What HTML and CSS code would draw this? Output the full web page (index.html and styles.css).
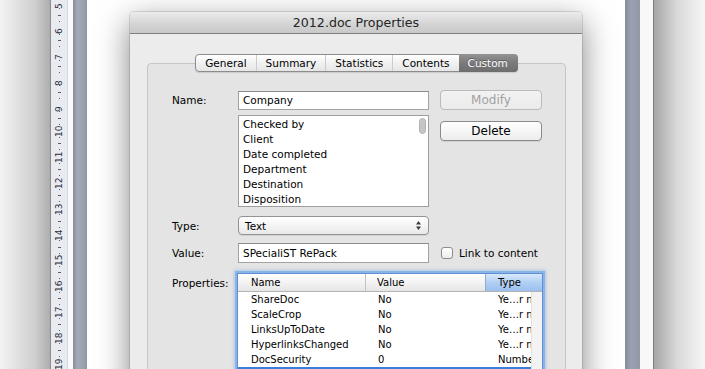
FILE: index.html
```html
<!DOCTYPE html>
<html>
<head>
<meta http-equiv="Content-Type" content="text/html; charset=utf-8">
<title>2012.doc Properties</title>
<link rel="stylesheet" href="styles.css">
</head>
<body>
<div class="desk">
    <div class="margin-left"></div>
    <div class="ruler">
        <div class="mark"><span>5</span></div>
        <div class="mark"><span>6</span></div>
        <div class="mark"><span>7</span></div>
        <div class="mark"><span>8</span></div>
        <div class="mark"><span>9</span></div>
        <div class="mark"><span>10</span></div>
        <div class="mark"><span>11</span></div>
        <div class="mark"><span>12</span></div>
        <div class="mark"><span>13</span></div>
        <div class="mark"><span>14</span></div>
        <div class="mark"><span>15</span></div>
        <div class="mark"><span>16</span></div>
        <div class="mark"><span>17</span></div>
        <div class="mark"><span>18</span></div>
        <div class="mark"><span>19</span></div>
    </div>
    <div class="gutter"></div>
    <div class="bar"></div>

    <div class="page">
        <div class="dialog">
            <div class="titlebar">2012.doc Properties</div>
            <div class="dialog-body">
                <ul class="tabs">
                    <li>General</li>
                    <li>Summary</li>
                    <li>Statistics</li>
                    <li>Contents</li>
                    <li class="active">Custom</li>
                </ul>
                <div class="group">
                    <div class="row">
                        <span class="label">Name:</span>
                        <div class="field input">Company</div>
                        <div class="btn disabled">Modify</div>
                    </div>
                    <div class="row row-list">
                        <span class="label"></span>
                        <div class="field listbox">
                            <ul class="items">
                                <li>Checked by</li>
                                <li>Client</li>
                                <li>Date completed</li>
                                <li>Department</li>
                                <li>Destination</li>
                                <li>Disposition</li>
                            </ul>
                            <div class="scroller"><div class="thumb"></div></div>
                        </div>
                        <div class="btn btn-delete">Delete</div>
                    </div>
                    <div class="row row-type">
                        <span class="label">Type:</span>
                        <div class="field select">
                            <span>Text</span>
                            <svg width="5" height="9" viewBox="0 0 5 9"><path d="M0 3.5L2.5 0L5 3.5Z M0 5.5L2.5 9L5 5.5Z" fill="#3a3a3a"/></svg>
                        </div>
                    </div>
                    <div class="row row-value">
                        <span class="label">Value:</span>
                        <div class="field input input-value">SPecialiST RePack</div>
                        <div class="link">
                            <span class="check"></span>
                            <span>Link to content</span>
                        </div>
                    </div>
                    <div class="row row-props">
                        <span class="label label-props">Properties:</span>
                        <div class="props">
                            <div class="thead">
                                <div class="th">Name</div>
                                <div class="th">Value</div>
                                <div class="th th-sorted">Type</div>
                            </div>
                            <div class="tbody">
                                <div class="rows">
                                    <div class="tr"><div class="td">ShareDoc</div><div class="td">No</div><div class="td">Ye…r no</div></div>
                                    <div class="tr"><div class="td">ScaleCrop</div><div class="td">No</div><div class="td">Ye…r no</div></div>
                                    <div class="tr"><div class="td">LinksUpToDate</div><div class="td">No</div><div class="td">Ye…r no</div></div>
                                    <div class="tr"><div class="td">HyperlinksChanged</div><div class="td">No</div><div class="td">Ye…r no</div></div>
                                    <div class="tr"><div class="td">DocSecurity</div><div class="td">0</div><div class="td">Number</div></div>
                                    <div class="tr selected"></div>
                                </div>
                                <div class="vtrack"></div>
                            </div>
                        </div>
                    </div>
                </div>
            </div>
        </div>
    </div>

    <div class="bar bar-right"></div>
    <div class="gutter gutter-right"></div>
    <div class="margin-right"></div>
</div>
</body>
</html>
```

FILE: styles.css
```css
*{ margin: 0; padding: 0; list-style: none; box-sizing: border-box;}
body{ font-family: "DejaVu Sans", "Liberation Sans", sans-serif; font-size: 10.5px; color: #000;}

.desk{ display: flex; width: 705px; height: 369px; overflow: hidden; background: #fff;}

/* word window behind the dialog */
.margin-left{ width: 51px; flex-shrink: 0; background: linear-gradient(to right, #f3f3f3, #cfcfcf 70%, #aeaeae); border-right: 1px solid #8d8d8d;}
.ruler{ width: 17px; flex-shrink: 0; background: #e8ebf0; border-right: 1px solid #d4d8de; overflow: hidden;}
.ruler .mark{ height: 25.8px; display: flex; flex-direction: column; align-items: center;
    background: linear-gradient(#5a5f6a, #5a5f6a) no-repeat 8px 12.5px / 1px 1px,
                linear-gradient(#5a5f6a, #5a5f6a) no-repeat 7px 19px / 3px 1px,
                linear-gradient(#5a5f6a, #5a5f6a) no-repeat 8px 25px / 1px 1px;}
.ruler .mark:first-child{ margin-top: -4.5px;}
.ruler .mark span{ height: 12.9px; display: flex; align-items: center; writing-mode: vertical-rl; transform: rotate(180deg); font-size: 9px; line-height: 1; color: #2a2f3c;}
.gutter{ width: 5px; flex-shrink: 0; background: #fafafa;}
.bar{ width: 14px; flex-shrink: 0; background: linear-gradient(to right, #868c98, #a3aab7 30%, #9aa1ae 80%, #8e95a2);}
.page{ width: 538px; flex-shrink: 0; background: #fff; position: relative; z-index: 1;}
.bar-right{ width: 15px; background: linear-gradient(to right, #858c9a, #9aa2b1 40%, #9199a8);}
.gutter-right{ width: 14px; background: #f8f8f8; border-right: 1px solid #7d7d7d;}
.margin-right{ flex: 1; background: linear-gradient(to right, #a6a6a6, #d9d9d9 45%, #f6f6f6);}

/* dialog */
.dialog{ width: 452px; height: 400px; margin: 12px 0 0 43px; border-radius: 4px 4px 0 0; background: #ececec;
    box-shadow: 0 10px 32px rgba(0,0,0,.5), 0 0 0 1px rgba(0,0,0,.12);}
.titlebar{ height: 22px; line-height: 21px; text-align: center; font-size: 12.6px; color: #262626;
    border-radius: 4px 4px 0 0; border-bottom: 1px solid #7e7e7e;
    background: linear-gradient(#ececec, #d3d3d3 60%, #c9c9c9);}
.dialog-body{ padding: 20px 16px 0 17px;}

.tabs{ display: flex; width: max-content; margin: 0 auto -9px; position: relative; z-index: 1;
    border: 1px solid #8c8c8c; border-radius: 4px; background: linear-gradient(#ffffff, #f1f1f1 50%, #e6e6e6);
    box-shadow: 0 1px 1px rgba(0,0,0,.12);}
.tabs li{ padding: 0 9px; height: 16px; line-height: 16px; border-left: 1px solid #cbcbcb;}
.tabs li:first-child{ border-left: 0;}
.tabs li.active{ margin: -1px -1px -1px 0; height: 18px; line-height: 18px; padding-right: 10px; border-left: 0;
    color: #fff; border-radius: 0 4px 4px 0; background: linear-gradient(#939393, #7a7a7a 50%, #6d6d6d);
    text-shadow: 0 -1px 0 rgba(0,0,0,.35);}

.group{ height: 340px; border: 1px solid #c6c6c6; border-radius: 4px; background: #e4e4e4; padding: 26px 0 0 24px;}

.row{ display: flex; align-items: center;}
.label{ width: 66px; flex-shrink: 0;}
.field{ width: 191px; flex-shrink: 0; background: #fff;}
.input{ height: 19px; line-height: 17px; padding-left: 4px; border: 1px solid #a3a3a3; border-top-color: #8c8c8c;}
.input-value{ height: 20px; line-height: 18px;}

.btn{ width: 102px; height: 20px; margin-left: 11px; line-height: 18px; text-align: center; font-size: 12px;
    border: 1px solid #8b8b8b; border-radius: 4px; background: linear-gradient(#ffffff, #f6f6f6 50%, #ececec);
    box-shadow: 0 1px 0 rgba(0,0,0,.08);}
.btn.disabled{ color: #a2a2a2; border-color: #bababa; background: linear-gradient(#f2f2f2, #ebebeb); box-shadow: none;}

.row-list{ align-items: flex-start; margin-top: 5px;}
.listbox{ height: 92px; display: flex; border: 1px solid #9e9e9e;}
.items{ flex: 1; padding: 1px 0 0 4px;}
.items li{ height: 15px; line-height: 15px;}
.scroller{ width: 11px; padding: 2px 0 0 2px;}
.thumb{ width: 7px; height: 16px; border-radius: 4px; background: #c6c6c6; border: 1px solid #b3b3b3;}
.btn-delete{ margin-top: 6px;}

.row-type{ margin-top: 9px;}
.select{ height: 19px; display: flex; align-items: center; justify-content: space-between; padding: 0 7px 0 6px;
    border: 1px solid #939393; border-radius: 4px; background: linear-gradient(#ffffff, #f4f4f4 50%, #e9e9e9);
    box-shadow: 0 1px 0 rgba(0,0,0,.08);}

.row-value{ margin-top: 8px;}
.link{ display: flex; align-items: center; margin-left: 12px;}
.check{ width: 12px; height: 12px; margin-right: 6px; border: 1px solid #8d8d8d; border-radius: 3px;
    background: linear-gradient(#ffffff, #ececec);}

.row-props{ align-items: flex-start; margin-top: 10px;}
.label-props{ margin-top: 2px; line-height: 17px;}
.props{ width: 306px; height: 110px; margin-left: -1px; font-size: 10px; background: #fff;
    border: 1px solid #5f8fd3; box-shadow: 0 0 0 2px #8ab3ea, 0 0 3px 3px rgba(110,160,230,.45);}
.thead{ display: grid; grid-template-columns: 128px 120px 1fr; height: 18px; border-bottom: 1px solid #b4b4b4;
    background: linear-gradient(#ffffff, #f3f3f3 50%, #e5e5e5);}
.th{ line-height: 17px; padding-left: 13px; border-right: 1px solid #c3c3c3;}
.th:nth-child(2){ padding-left: 11px;}
.th-sorted{ border-right: 0; border-left: 1px solid #8ea9d3; margin-left: -1px; padding-left: 12px;
    background: linear-gradient(#d9e8fa, #b1cff3 50%, #9ac0ee);}
.tbody{ display: flex;}
.rows{ width: 293px;}
.tr{ display: grid; grid-template-columns: 128px 120px 45px; height: 15px; line-height: 15px;}
.td{ padding-left: 13px; white-space: nowrap; overflow: hidden;}
.td:nth-child(2){ padding-left: 12px;}
.td:nth-child(3){ padding-left: 12px;}
.tr.selected{ background: #3b7fdc;}
.vtrack{ flex: 1; background: #f3f3f3; border-left: 1px solid #e2e2e2;}
```
